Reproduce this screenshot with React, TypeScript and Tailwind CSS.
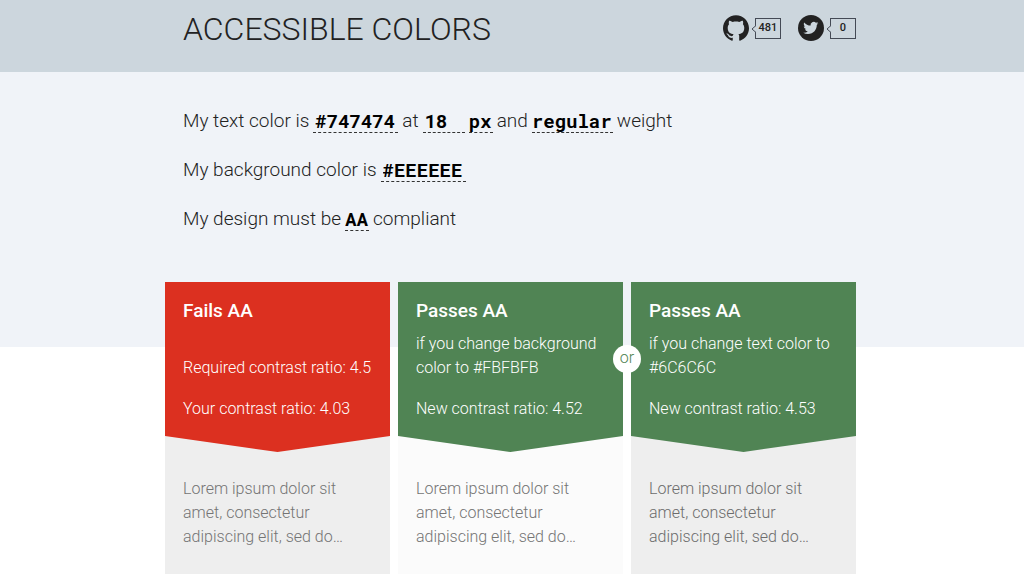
import { useState, type ReactNode } from "react";
import { SiGithub } from "react-icons/si";

const field =
  "h-[24px] border-b border-dashed border-[#333333] bg-transparent p-0 font-['Roboto_Mono','Liberation_Mono',monospace] text-[19px] leading-[22px] font-bold text-black outline-none";

function TwitterCircle() {
  return (
    <svg viewBox="0 0 26 26" className="size-[26px]" aria-hidden="true">
      <circle cx="13" cy="13" r="13" fill="#222222" />
      <path
        transform="translate(5.2 5.4) scale(0.63)"
        fill="#ccd6dd"
        d="M23.953 4.57a10 10 0 01-2.825.775 4.958 4.958 0 002.163-2.723c-.951.555-2.005.959-3.127 1.184a4.92 4.92 0 00-8.384 4.482C7.69 8.095 4.067 6.13 1.64 3.162a4.822 4.822 0 00-.666 2.475c0 1.71.87 3.213 2.188 4.096a4.904 4.904 0 01-2.228-.616v.06a4.923 4.923 0 003.946 4.827 4.996 4.996 0 01-2.212.085 4.936 4.936 0 004.604 3.417 9.867 9.867 0 01-6.102 2.105c-.39 0-.779-.023-1.17-.067a13.995 13.995 0 007.557 2.209c9.053 0 13.998-7.496 13.998-13.985 0-.21 0-.42-.015-.63A9.935 9.935 0 0024 4.59z"
      />
    </svg>
  );
}

function ShareLink({ label, count, children }: { label: string; count: number; children: ReactNode }) {
  return (
    <a href="#" aria-label={`${label} ${count}`} className="flex items-center gap-[6px] text-[#222222]">
      {children}
      <span className="relative flex h-[21px] w-[26px] items-center justify-center border border-[#444a55] text-[11px] font-medium">
        <svg viewBox="0 0 5 8" className="absolute top-[6px] -left-[5px] h-[8px] w-[5px]" aria-hidden="true">
          <path d="M5 0.5 L1 4 L5 7.5" fill="#ccd6dd" stroke="#444a55" />
        </svg>
        {count}
      </span>
    </a>
  );
}

type CardProps = {
  title: string;
  note?: string;
  ratios: string[];
  head: string;
  sample: string;
  badge?: boolean;
};

function Card({ title, note, ratios, head, sample, badge }: CardProps) {
  return (
    <section className={`relative flex-1 ${sample}`}>
      <div className={`h-[170px] px-[18px] pt-[17px] text-white [clip-path:polygon(0_0,100%_0,100%_154px,50%_100%,0_154px)] ${head}`}>
        <h2 className="text-[19px] leading-6 font-medium">{title}</h2>
        {note && <p className="mt-[9px] leading-6">{note}</p>}
        <div className={note ? "mt-[17px]" : "mt-[33px]"}>
          {ratios.map((ratio) => (
            <p key={ratio} className="mb-[17px] leading-6 whitespace-nowrap">
              {ratio}
            </p>
          ))}
        </div>
      </div>
      <p className="px-[18px] py-[25px] leading-6">
        Lorem ipsum dolor sit amet, consectetur adipiscing elit, sed do…
      </p>
      {badge && (
        <span className="absolute top-[63px] -right-[18px] z-10 flex size-[28px] justify-center rounded-full bg-white leading-[25px] text-[#508454]">
          or
        </span>
      )}
    </section>
  );
}

export default function App() {
  const [text, setText] = useState("#747474");
  const [size, setSize] = useState("18");
  const [background, setBackground] = useState("#EEEEEE");

  return (
    <div className="min-h-screen bg-white font-[Roboto,sans-serif] text-[16px] font-light text-[#222222]">
      <header className="bg-[#ccd6dd]">
        <div className="mx-auto flex h-[72px] max-w-[694px] items-start justify-between pr-[3px] pl-[18px]">
          <h1 className="pt-[9px] text-[32px] leading-10">ACCESSIBLE COLORS</h1>
          <nav className="flex gap-[17px] pt-[15px]">
            <ShareLink label="GitHub" count={481}>
              <SiGithub className="size-[26px]" />
            </ShareLink>
            <ShareLink label="Twitter" count={0}>
              <TwitterCircle />
            </ShareLink>
          </nav>
        </div>
      </header>
      <main>
        <form className="bg-[#f0f3f8]">
          <div className="mx-auto flex h-[275px] max-w-[694px] flex-col gap-[25px] pt-[37px] pl-[18px] text-[19px] leading-6">
            <div className="flex items-center gap-1">
              <label htmlFor="text">My text color is</label>
              <input id="text" className={`${field} w-[85px] pl-[2px]`} value={text} onChange={(e) => setText(e.target.value)} />
              <label htmlFor="size">at</label>
              <input id="size" className={`${field} w-[42px] pl-[2px]`} value={size} onChange={(e) => setSize(e.target.value)} />
              <select aria-label="Unit" className={`${field} w-[24px] appearance-none`}>
                <option>px</option>
              </select>
              <label htmlFor="weight">and</label>
              <select id="weight" className={`${field} w-[81px] appearance-none`}>
                <option>regular</option>
                <option>bold</option>
              </select>
              <span>weight</span>
            </div>
            <div className="flex items-center gap-1">
              <label htmlFor="background">My background color is</label>
              <input id="background" className={`${field} w-[85px] pl-[2px]`} value={background} onChange={(e) => setBackground(e.target.value)} />
            </div>
            <div className="flex items-center gap-1">
              <label htmlFor="level">My design must be</label>
              <select id="level" className={`${field} w-[24px] appearance-none`}>
                <option>AA</option>
                <option>AAA</option>
              </select>
              <span>compliant</span>
            </div>
          </div>
        </form>
        <div className="mx-auto -mt-[65px] flex max-w-[694px] gap-2 pr-[3px]">
          <Card
            title="Fails AA"
            ratios={["Required contrast ratio: 4.5", "Your contrast ratio: 4.03"]}
            head="bg-[#dc3020]"
            sample="bg-[#eeeeee] text-[#747474]"
          />
          <Card
            title="Passes AA"
            note="if you change background color to #FBFBFB"
            ratios={["New contrast ratio: 4.52"]}
            head="bg-[#508454]"
            sample="bg-[#fbfbfb] text-[#747474]"
            badge
          />
          <Card
            title="Passes AA"
            note="if you change text color to #6C6C6C"
            ratios={["New contrast ratio: 4.53"]}
            head="bg-[#508454]"
            sample="bg-[#eeeeee] text-[#6c6c6c]"
          />
        </div>
      </main>
    </div>
  );
}
